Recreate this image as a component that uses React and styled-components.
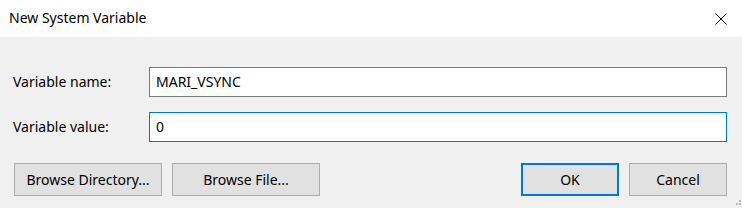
import React from "react";
import styled, { createGlobalStyle } from "styled-components";

const Global = createGlobalStyle`
  html, body { margin: 0; padding: 0; background: #f0f0f0; }
  body { font-family: "Noto Sans", "Segoe UI", sans-serif; }
`;

const Window = styled.div`
  position: relative;
  width: 742px;
  height: 208px;
  background: #f0f0f0;
  display: flex;
  flex-direction: column;
  font-family: "Noto Sans", sans-serif;
  font-size: 14px;
  color: #000;
  overflow: hidden;
`;

const TitleBar = styled.div`
  height: 37px;
  flex: none;
  background: #fff;
  display: flex;
  align-items: center;
  justify-content: space-between;
  padding-left: 9px;
`;

const Title = styled.div`
  font-size: 14px;
  line-height: 20px;
  margin-top: -1px;
`;

const CloseButton = styled.div`
  width: 42px;
  height: 37px;
  display: flex;
  align-items: center;
  justify-content: center;
  svg { display: block; }
`;

const Body = styled.div`
  flex: 1;
  padding: 30px 15px 0 13px;
  display: flex;
  flex-direction: column;
`;

const Fields = styled.div`
  display: grid;
  grid-template-columns: 136px 1fr;
  row-gap: 15px;
  align-items: center;
`;

const Label = styled.label`
  font-size: 14px;
  line-height: 20px;
`;

const Input = styled.div`
  height: 30px;
  box-sizing: border-box;
  border: 1px solid ${(p) => (p.$focused ? "#0078d7" : "#7a7a7a")};
  background: #fff;
  padding: 0 6px;
  display: flex;
  align-items: center;
  font-size: 14px;
  line-height: 20px;
`;

const Buttons = styled.div`
  margin-top: 21px;
  margin-left: 1px;
  display: flex;
  align-items: center;
`;

const Group = styled.div`
  display: flex;
  gap: 10px;
`;

const Spacer = styled.div`
  flex: 1;
`;

const Button = styled.div`
  width: ${(p) => p.$w}px;
  height: 33px;
  box-sizing: border-box;
  border: ${(p) => (p.$default ? "2px solid #0078d7" : "1px solid #adadad")};
  background: #e1e1e1;
  display: flex;
  align-items: center;
  justify-content: center;
  font-size: 14px;
  line-height: 20px;
`;

const Grip = styled.svg`
  position: absolute;
  right: 0;
  bottom: 0;
`;

export default function App() {
  return (
    <>
      <Global />
      <Window>
        <TitleBar>
          <Title>New System Variable</Title>
          <CloseButton>
            <svg width="12" height="12" viewBox="0 0 12 12">
              <path d="M0.5 0.5 L11.5 11.5 M11.5 0.5 L0.5 11.5" stroke="#000" strokeWidth="1" />
            </svg>
          </CloseButton>
        </TitleBar>
        <Body>
          <Fields>
            <Label>Variable name:</Label>
            <Input>MARI_VSYNC</Input>
            <Label>Variable value:</Label>
            <Input $focused>0</Input>
          </Fields>
          <Buttons>
            <Group>
              <Button $w={148}>Browse Directory...</Button>
              <Button $w={148}>Browse File...</Button>
            </Group>
            <Spacer />
            <Group>
              <Button $w={98} $default>OK</Button>
              <Button $w={98}>Cancel</Button>
            </Group>
          </Buttons>
        </Body>
        <Grip width="9" height="9" viewBox="0 0 9 9">
          <rect x="6" y="1" width="2" height="2" fill="#bcbcbc" />
          <rect x="3" y="4" width="2" height="2" fill="#bcbcbc" />
          <rect x="6" y="4" width="2" height="2" fill="#bcbcbc" />
        </Grip>
      </Window>
    </>
  );
}
